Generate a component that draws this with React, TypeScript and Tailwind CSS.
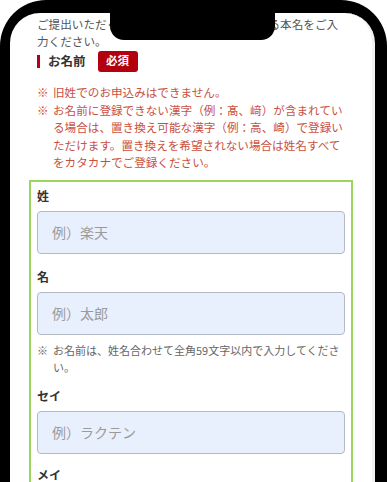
import React from 'react';

const font = { fontFamily: '"Noto Sans CJK JP", "Noto Sans", sans-serif' };

function Field({ label, placeholder }: { label: string; placeholder: string }) {
  return (
    <div>
      <p className="text-[12px] leading-[18px] font-bold text-[#333]">{label}</p>
      <div className="mt-[6px] h-[43px] rounded-[4px] border border-[#b4bac4] bg-[#e8f0fe] flex items-center px-[14px]">
        <span className="text-[14px] text-[#9a9a9a]">{placeholder}</span>
      </div>
    </div>
  );
}

function Note({ children, className }: { children: React.ReactNode; className?: string }) {
  return (
    <p className={`flex ${className ?? ''}`}>
      <span className="w-[16px] shrink-0">※</span>
      <span>{children}</span>
    </p>
  );
}

export default function App() {
  return (
    <div style={font} className="w-[387px] h-[482px] overflow-hidden bg-white">
      <div className="relative h-[520px] bg-black rounded-t-[46px] pt-[13px] pl-[10px] pr-[12px]">
        {/* notch */}
        <div className="absolute left-[110px] top-0 w-[165px] h-[40px] bg-black rounded-b-[14px] z-10" />
        <div className="h-full bg-white rounded-t-[30px] overflow-hidden border-r-[3px] border-[#f2f2f2]">
          <div className="px-[19px] pt-[3px]">
            <div className="px-[8px]">
              <p className="text-[11.6px] leading-[17px] text-[#555] whitespace-nowrap">
                ご提出いただく本人確認書類に記載されている本名をご入
                <br />
                力ください。
              </p>
              <div className="flex items-center h-[22px]">
                <span className="w-[3px] h-[13px] bg-[#b5001b]" />
                <span className="ml-[8px] text-[12.5px] font-bold text-[#333]">お名前</span>
                <span className="ml-[12px] w-[40px] h-[21px] rounded-[3px] bg-[#b3000f] text-white text-[11.5px] font-bold flex items-center justify-center">
                  必須
                </span>
              </div>
              <div className="mt-[12px] text-[11.6px] leading-[17.5px] text-[#c9503f]">
                <Note>旧姓でのお申込みはできません。</Note>
                <Note>
                  お名前に登録できない漢字（例：髙、﨑）が含まれている場合は、置き換え可能な漢字（例：高、崎）で登録いただけます。置き換えを希望されない場合は姓名すべてをカタカナでご登録ください。
                </Note>
              </div>
            </div>
            <div className="mt-[8px] border-2 border-[#9ad65e] px-[6px] pt-[5px] pb-[10px]">
              <Field label="姓" placeholder="例）楽天" />
              <div className="mt-[14px]">
                <Field label="名" placeholder="例）太郎" />
              </div>
              <div className="mt-[7px] text-[11px] leading-[17px] text-[#666]">
                <Note>お名前は、姓名合わせて全角59文字以内で入力してください。</Note>
              </div>
              <div className="mt-[11px]">
                <Field label="セイ" placeholder="例）ラクテン" />
              </div>
              <div className="mt-[12px]">
                <Field label="メイ" placeholder="例）タロウ" />
              </div>
            </div>
          </div>
        </div>
      </div>
    </div>
  );
}
